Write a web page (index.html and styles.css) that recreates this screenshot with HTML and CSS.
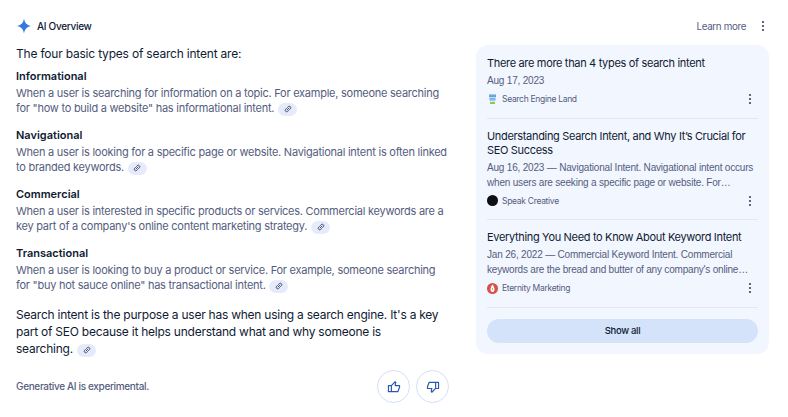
FILE: index.html
```html
<!DOCTYPE html>
<html lang="en">
<head>
    <meta charset="UTF-8">
    <meta name="viewport" content="width=device-width, initial-scale=1.0">
    <title>AI Overview</title>
    <link rel="stylesheet" href="styles.css">
</head>
<body>
    <!-- Shared icons -->
    <svg class="sprite" width="0" height="0">
        <symbol id="link" viewBox="0 0 24 24">
            <g transform="rotate(-45 12 12)" fill="none" stroke="currentColor" stroke-width="2.6" stroke-linecap="round">
                <path d="M10 7.500H6.500a4.500 4.500 0 0 0 0 9H10M14 7.500h3.500a4.500 4.500 0 0 1 0 9H14M8 12h8"/>
            </g>
        </symbol>
        <symbol id="dots" viewBox="0 0 4 12">
            <circle cx="2" cy="2" r="1.1"/>
            <circle cx="2" cy="6" r="1.1"/>
            <circle cx="2" cy="10" r="1.1"/>
        </symbol>
        <symbol id="thumb" viewBox="0 0 24 24">
            <path d="M2.500 9.500h5V20h-5zM7.500 9.500L14 3l1 1-1 5.500h7.500v3L18.500 20h-11z" fill="none" stroke="currentColor" stroke-width="2" stroke-linejoin="round"/>
        </symbol>
    </svg>

    <header class="header">
        <svg class="spark" viewBox="0 0 16 16"><path d="M8 0.500C8.700 5 11 7.300 15.500 8 11 8.700 8.700 11 8 15.500 7.300 11 5 8.700 0.500 8 5 7.300 7.300 5 8 0.500z"/></svg>
        <span class="title">AI Overview</span>
        <a class="learn-more">Learn more</a>
        <svg class="dots"><use href="#dots"/></svg>
    </header>

    <main class="content">
        <div class="overview">
            <h1>The four basic types of search intent are:</h1>

            <section class="intent">
                <h2>Informational</h2>
                <p>When a user is searching for information on a topic. For example, someone searching<br>for "how to build a website" has informational intent. <span class="chip"><svg><use href="#link"/></svg></span></p>
            </section>
            <section class="intent">
                <h2>Navigational</h2>
                <p>When a user is looking for a specific page or website. Navigational intent is often linked<br>to branded keywords. <span class="chip"><svg><use href="#link"/></svg></span></p>
            </section>
            <section class="intent">
                <h2>Commercial</h2>
                <p>When a user is interested in specific products or services. Commercial keywords are a<br>key part of a company's online content marketing strategy. <span class="chip"><svg><use href="#link"/></svg></span></p>
            </section>
            <section class="intent">
                <h2>Transactional</h2>
                <p>When a user is looking to buy a product or service. For example, someone searching<br>for "buy hot sauce online" has transactional intent. <span class="chip"><svg><use href="#link"/></svg></span></p>
            </section>

            <p class="summary">Search intent is the purpose a user has when using a search engine. It's a key<br>part of SEO because it helps understand what and why someone is<br>searching. <span class="chip"><svg><use href="#link"/></svg></span></p>

            <footer class="footer">
                <span class="note">Generative AI is experimental.</span>
                <button class="vote"><svg><use href="#thumb"/></svg></button>
                <button class="vote down"><svg><use href="#thumb"/></svg></button>
            </footer>
        </div>

        <aside class="sources">
            <article class="source">
                <h3>There are more than 4 types of search intent</h3>
                <p>Aug 17, 2023</p>
                <div class="site">
                    <svg class="favicon" viewBox="0 0 11 11">
                        <path d="M2 0.500h7v2.800H2z" fill="#5b9bd8"/>
                        <path d="M2.500 4h6v2.600h-6z" fill="#68b3ec"/>
                        <path d="M3 7.800h5v2.200H3z" fill="#8ccb50"/>
                        <path d="M2 1.900h7M2.500 5.300h6" stroke="#bfe0f5" stroke-width="0.500" stroke-dasharray="1 0.800"/>
                    </svg>
                    <span>Search Engine Land</span>
                    <svg class="dots"><use href="#dots"/></svg>
                </div>
            </article>
            <article class="source">
                <h3>Understanding Search Intent, and Why It’s Crucial for<br>SEO Success</h3>
                <p>Aug 16, 2023 — Navigational Intent. Navigational intent occurs<br>when users are seeking a specific page or website. For…</p>
                <div class="site">
                    <svg class="favicon" viewBox="0 0 11 11"><circle cx="5.500" cy="5.500" r="5.500" fill="#0d0f14"/></svg>
                    <span>Speak Creative</span>
                    <svg class="dots"><use href="#dots"/></svg>
                </div>
            </article>
            <article class="source">
                <h3>Everything You Need to Know About Keyword Intent</h3>
                <p>Jan 26, 2022 — Commercial Keyword Intent. Commercial<br>keywords are the bread and butter of any company's online…</p>
                <div class="site">
                    <svg class="favicon" viewBox="0 0 11 11">
                        <circle cx="5.500" cy="5.500" r="5.500" fill="#d65248"/>
                        <path d="M5.500 1.500C6.500 2.800 7.500 4.600 7.500 6.500A2 2.500 0 0 1 3.500 6.500C3.500 4.600 4.500 2.800 5.500 1.500z" fill="#fff"/>
                        <path d="M5.500 5v1.800" stroke="#d65248" stroke-width="0.700"/>
                    </svg>
                    <span>Eternity Marketing</span>
                    <svg class="dots"><use href="#dots"/></svg>
                </div>
            </article>
            <button class="show-all">Show all</button>
        </aside>
    </main>
</body>
</html>
```

FILE: styles.css
```css
* {
    box-sizing: border-box;
}

body {
    margin: 0;
    padding: 16px 19px 0 16px;
    background: #fff;
    color: #101a33;
    font-family: Inter, "Open Sans", sans-serif;
    height: 417px;
    overflow: hidden;
}

h1, h2, h3, p {
    margin: 0;
    font-weight: 400;
    white-space: nowrap;
}

button {
    font-family: inherit;
    padding: 0;
}

.sprite {
    display: block;
    height: 0;
}

.dots {
    width: 4px;
    height: 12px;
    fill: #3c4565;
}

.header {
    display: flex;
    align-items: center;
    height: 20px;
    font-size: 10px;
}

.spark {
    width: 16px;
    height: 16px;
    fill: #3578dc;
}

.title {
    margin-left: 5px;
    font-weight: 500;
    letter-spacing: -0.3px;
}

.learn-more {
    margin-left: auto;
    margin-right: 15px;
    color: #545d7e;
    font-size: 9.8px;
    letter-spacing: -0.35px;
}

.header .dots {
    margin-right: 4px;
}

.content {
    display: flex;
    justify-content: space-between;
    align-items: flex-start;
}

.overview {
    width: 433px;
    padding-top: 9px;
}

h1 {
    font-size: 12px;
    line-height: 18px;
    letter-spacing: -0.2px;
}

.intent {
    height: 59px;
    padding-top: 5px;
}

.intent h2 {
    font-size: 11px;
    font-weight: 600;
    line-height: 16px;
}

.intent p {
    margin-top: 2px;
    font-size: 11px;
    line-height: 15px;
    letter-spacing: -0.25px;
    color: #545d7e;
}

.chip {
    display: inline-flex;
    align-items: center;
    justify-content: center;
    width: 19px;
    height: 13px;
    margin: -2px 0 -2px 1px;
    border-radius: 7px;
    background: #e6ebfb;
    color: #3c4565;
    vertical-align: -3px;
}

.chip svg {
    width: 8px;
    height: 8px;
}

/* Sit the pill on the text's middle, not under its baseline */
.intent .chip,
.summary .chip {
    vertical-align: -1px;
}

.summary {
    padding-top: 7px;
    font-size: 12px;
    line-height: 17px;
    letter-spacing: -0.24px;
}

.footer {
    display: flex;
    align-items: center;
    gap: 6px;
    height: 33px;
    margin-top: 13px;
}

.note {
    margin-right: auto;
    margin-bottom: 1px;
    font-size: 10px;
    font-weight: 500;
    letter-spacing: -0.34px;
    color: #545d7e;
}

.vote {
    display: flex;
    align-items: center;
    justify-content: center;
    width: 33px;
    height: 33px;
    border: 1px solid #d2e0f6;
    border-radius: 50%;
    background: #fff;
    color: #2858b0;
}

.vote svg {
    width: 14px;
    height: 14px;
}

.down svg {
    transform: rotate(180deg);
}

/* Source cards */
.sources {
    width: 293px;
    height: 309px;
    margin-top: 9px;
    padding: 11px 11px 10px;
    border-radius: 12px;
    background: #f2f6fe;
}

.source {
    padding-bottom: 12.5px;
    border-bottom: 1px solid #e2e7f3;
}

.source + .source {
    padding-top: 10px;
}

.source h3 {
    font-size: 11px;
    line-height: 14px;
    letter-spacing: -0.33px;
}

.source p {
    margin-top: 3px;
    font-family: "Liberation Sans", Arial, sans-serif;
    font-size: 10px;
    line-height: 15px;
    letter-spacing: -0.19px;
    color: #545d7e;
}

.site {
    display: flex;
    align-items: center;
    height: 12px;
    margin-top: 5px;
    font-size: 8.5px;
    letter-spacing: -0.3px;
    color: #545d7e;
}

.favicon {
    width: 11px;
    height: 11px;
    margin-right: 4px;
}

.site .dots {
    margin-left: auto;
    margin-right: 6px;
}

.show-all {
    display: block;
    width: 100%;
    height: 24px;
    margin-top: 11px;
    border: none;
    border-radius: 12px;
    background: #d5e3fa;
    color: #101a33;
    font-size: 9.5px;
    font-weight: 500;
    letter-spacing: -0.3px;
}
```
